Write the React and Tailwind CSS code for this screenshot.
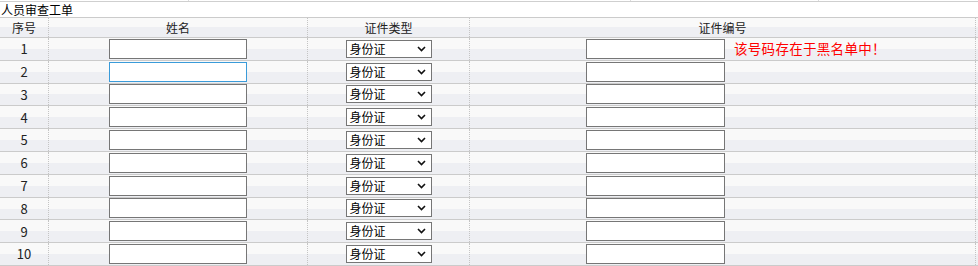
import React from 'react';

const font = { fontFamily: '"Noto Sans CJK SC", "Liberation Sans", sans-serif' };

const rows = [1, 2, 3, 4, 5, 6, 7, 8, 9, 10];

function Cell({ children, className = '' }) {
  return (
    <div className={`flex items-center border-r border-dotted border-[#c4c4c4] ${className}`}>
      {children}
    </div>
  );
}

function Row({ n }) {
  return (
    <div className="grid grid-cols-[49px_259px_162px_506px] h-[22.8px] border-b border-[#cbcbcb] bg-[linear-gradient(#f9f9f9_0%,#f9f9f9_50%,#eeeff3_50%,#eeeff3_100%)]">
      <Cell className="justify-center text-[13px] text-[#222]">{n}</Cell>
      <Cell className="justify-center">
        <input
          type="text"
          className={`w-[138px] h-[20px] bg-white border outline-none ${n === 2 ? 'border-[#3a9bd9]' : 'border-[#767676]'}`}
        />
      </Cell>
      <Cell className="justify-center">
        <div className="w-[86px] h-[18px] bg-white border border-[#767676] flex items-center justify-between pl-[3px] pr-[5px] text-[12px] leading-none text-black">
          <span>身份证</span>
          <svg width="9" height="6" viewBox="0 0 9 6">
            <path d="M1 1 L4.5 4.5 L8 1" fill="none" stroke="#111" strokeWidth="1.6" />
          </svg>
        </div>
      </Cell>
      <Cell className="pl-[116px]">
        <input type="text" className="w-[139px] h-[20px] bg-white border border-[#767676] outline-none" />
        {n === 1 && (
          <span className="ml-[9px] text-[13.5px] leading-none text-[#ff0000] tracking-[0.3px]">该号码存在于黑名单中！</span>
        )}
      </Cell>
    </div>
  );
}

export default function App() {
  return (
    <div className="w-[978px] h-[266px] bg-white overflow-hidden text-black" style={font}>
      {/* top strip: tail of the previous grid */}
      <div className="relative h-[2px] border-b border-[#cfcfcf]">
        <div className="absolute left-[188px] top-0 h-[1px] w-[1px] bg-[#dcdcdc]" />
        <div className="absolute left-[630px] top-0 h-[1px] w-[1px] bg-[#dcdcdc]" />
        <div className="absolute left-[818px] top-0 h-[1px] w-[1px] bg-[#dcdcdc]" />
      </div>
      <div className="h-[15px] text-[12px] leading-[15px] pl-[1px]">人员审查工单</div>
      <div className="border-t border-[#cbcbcb]">
        <div className="grid grid-cols-[49px_259px_162px_506px] h-[20px] border-b border-[#cbcbcb] bg-[linear-gradient(#f9f9f9_0%,#f9f9f9_50%,#eeeff3_50%,#eeeff3_100%)] text-[12px] text-[#222]">
          <Cell className="justify-center">序号</Cell>
          <Cell className="justify-center">姓名</Cell>
          <Cell className="justify-center">证件类型</Cell>
          <Cell className="justify-center">证件编号</Cell>
        </div>
        {rows.map((n) => (
          <Row key={n} n={n} />
        ))}
      </div>
    </div>
  );
}
